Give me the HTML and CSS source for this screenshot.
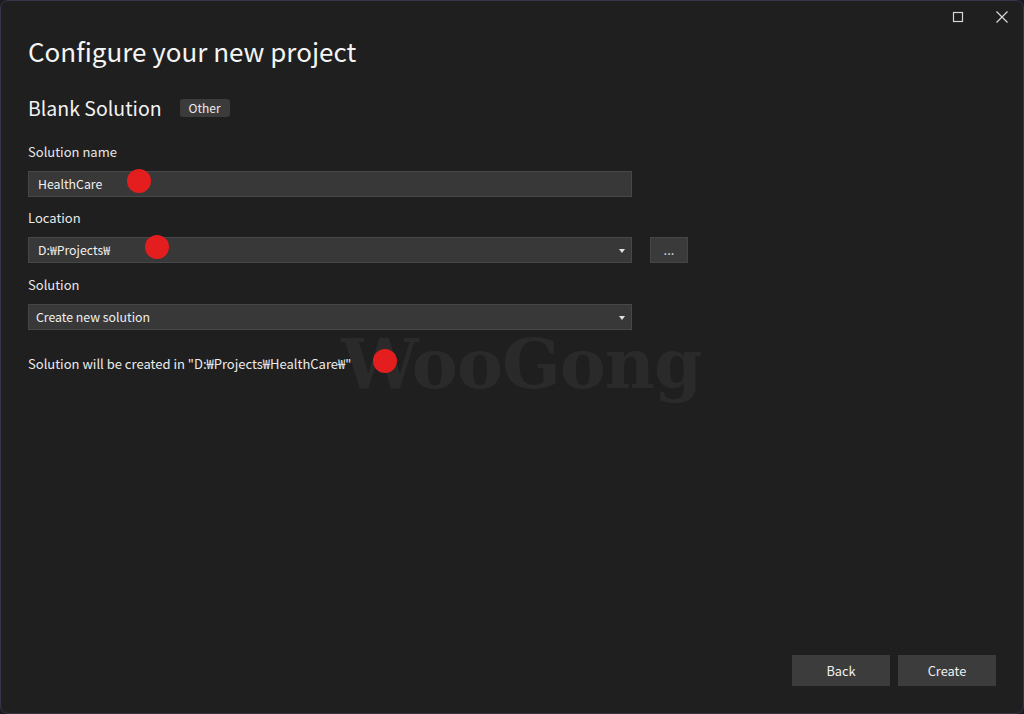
FILE: index.html
```html
<!DOCTYPE html>
<html>
<head>
<meta charset="utf-8">
<link rel="stylesheet" href="styles.css">
</head>
<body>
<div class="window">
  <div class="titlebar">
    <span class="tb-btn max"><svg width="12" height="12" viewBox="0 0 12 12"><rect x="1.5" y="1.5" width="9" height="9" fill="none" stroke="#d8d8d8" stroke-width="1.2"/></svg></span>
    <span class="tb-btn close"><svg width="14" height="14" viewBox="0 0 14 14"><path d="M1.5 1.5 L12.5 12.5 M12.5 1.5 L1.5 12.5" stroke="#d8d8d8" stroke-width="1.2"/></svg></span>
  </div>
  <div class="content">
    <h1 class="title">Configure your new project</h1>
    <div class="subtitle-row">
      <h2 class="subtitle">Blank Solution</h2>
      <span class="badge">Other</span>
    </div>
    <div class="field f-name">
      <label class="label">Solution name</label>
      <div class="input">HealthCare</div>
    </div>
    <div class="field f-loc">
      <label class="label">Location</label>
      <div class="row">
        <div class="input select">D:₩Projects₩<span class="arrow"></span></div>
        <div class="browse">...</div>
      </div>
    </div>
    <div class="field f-sol">
      <label class="label">Solution</label>
      <div class="input select plain">Create new solution<span class="arrow"></span></div>
    </div>
    <p class="note">Solution will be created in "D:₩Projects₩HealthCare₩"</p>
  </div>
  <div class="footer">
    <button class="btn">Back</button>
    <button class="btn">Create</button>
  </div>
  <div class="watermark">WooGong</div>
  <span class="dot d1"></span>
  <span class="dot d2"></span>
  <span class="dot d3"></span>
</div>
</body>
</html>
```
FILE: styles.css
```css
* { box-sizing: border-box; }
html, body { margin: 0; padding: 0; background: #1b1b22; }
body { width: 1024px; height: 714px; overflow: hidden; }
.window {
  position: relative;
  width: 1024px;
  height: 714px;
  background: #1f1f1f;
  border: 1px solid #35354a;
  border-radius: 8px;
  font-family: "Noto Sans CJK KR", "Noto Sans", sans-serif;
  color: #f2f2f2;
  display: flex;
  flex-direction: column;
  overflow: hidden;
}
.titlebar {
  height: 31px;
  display: flex;
  justify-content: flex-end;
  align-items: center;
  padding-right: 14px;
  gap: 31px;
}
.tb-btn { display: flex; align-items: center; justify-content: center; }
.content {
  padding-left: 27px;
  display: flex;
  flex-direction: column;
  flex: 1;
}
.title {
  margin: 1px 0 0 0;
  font-size: 26px;
  font-weight: 400;
  line-height: 36px;
  color: #f4f4f4;
}
.subtitle-row {
  display: flex;
  align-items: center;
  gap: 18px;
  margin-top: 25px;
  height: 28px;
}
.subtitle {
  margin: 0;
  font-size: 19.5px;
  font-weight: 400;
  line-height: 28px;
}
.badge {
  background: #3b3b3b;
  border-radius: 3px;
  font-size: 12px;
  line-height: 18px;
  padding: 0 9px;
  color: #eaeaea;
  margin-top: -1px;
}
.field { display: flex; flex-direction: column; }
.label {
  font-size: 13px;
  line-height: 20px;
  color: #e8e8e8;
  height: 20px;
  margin-bottom: 9px;
}
.f-name { margin-top: 20px; }
.f-loc { margin-top: 11px; }
.f-sol { margin-top: 12px; }
.input {
  position: relative;
  width: 604px;
  height: 26px;
  background: #383838;
  border: 1px solid #474747;
  font-size: 12.3px;
  line-height: 24px;
  padding-left: 9px;
  color: #f0f0f0;
}
.input.plain { padding-left: 7px; }
.arrow {
  position: absolute;
  right: 6px;
  top: 11px;
  width: 0; height: 0;
  border-left: 3.5px solid transparent;
  border-right: 3.5px solid transparent;
  border-top: 4px solid #e0e0e0;
}
.row { display: flex; gap: 18px; }
.browse {
  width: 38px;
  height: 26px;
  background: #3a3a3a;
  border: 1px solid #454545;
  font-size: 13px;
  line-height: 24px;
  text-align: center;
  color: #e0e0e0;
}
.note {
  margin: 24px 0 0 0;
  font-size: 13px;
  line-height: 20px;
  color: #ececec;
}
.footer {
  display: flex;
  justify-content: flex-end;
  gap: 8px;
  padding-right: 27px;
  padding-bottom: 27px;
}
.btn {
  width: 98px;
  height: 31px;
  background: #3c3c3c;
  border: none;
  color: #f0f0f0;
  font-family: inherit;
  font-size: 12.8px;
  padding: 0;
}
.watermark {
  position: absolute;
  left: 340px;
  top: 318px;
  font-family: "DejaVu Serif", serif;
  font-weight: 700;
  font-size: 69px;
  line-height: 90px;
  color: #2a2a2a;
  letter-spacing: -1px;
  pointer-events: none;
}
.dot {
  position: absolute;
  width: 24px;
  height: 24px;
  border-radius: 50%;
  background: #e41e1e;
}
.d1 { left: 126px; top: 168px; }
.d2 { left: 144px; top: 234px; }
.d3 { left: 372px; top: 348px; }
```
